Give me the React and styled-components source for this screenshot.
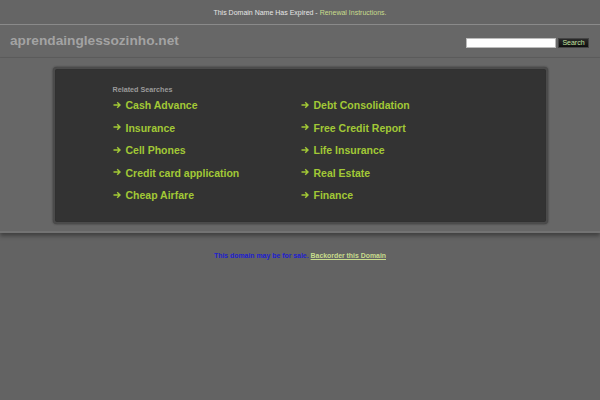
import React from "react";
import styled, { createGlobalStyle } from "styled-components";

const Global = createGlobalStyle`
  html, body { margin: 0; padding: 0; background: #636363; }
  body { font-family: "Liberation Sans", Arial, sans-serif; }
`;

const Page = styled.div`
  width: 600px;
  min-height: 400px;
  background: #636363;
`;

const TopBar = styled.div`
  height: 24px;
  display: flex;
  align-items: center;
  justify-content: center;
  font-size: 7px;
  color: #e6e6e6;
  background: #656565;
  border-bottom: 1px solid #8a8a8a;
`;

const Green = styled.span`
  color: #c8dc8c;
`;

const Header = styled.div`
  height: 32px;
  display: flex;
  align-items: center;
  justify-content: space-between;
  padding: 0 11px 0 10px;
  background: #676767;
  border-bottom: 1px solid #5d5d5d;
`;

const Domain = styled.div`
  font-size: 13.7px;
  font-weight: bold;
  color: #a3a3a3;
  padding-bottom: 1px;
`;

const SearchForm = styled.div`
  display: flex;
  align-items: center;
  gap: 2px;
  padding-top: 3px;
`;

const Input = styled.div`
  width: 88px;
  height: 8px;
  background: #fff;
  border: 1px solid #bbb;
`;

const Button = styled.div`
  width: 31px;
  height: 10px;
  display: flex;
  align-items: center;
  justify-content: center;
  font-size: 7px;
  color: #c4e2a0;
  background: linear-gradient(#2a2a2a, #0e0e0e);
  border: 1px solid #444;
  box-sizing: border-box;
`;

const Main = styled.div`
  height: 175px;
  padding-top: 9px;
  box-sizing: border-box;
  background: #676767;
  border-bottom: 2px solid #737373;
  box-shadow: 0 3px 4px rgba(0, 0, 0, 0.35);
`;

const Panel = styled.div`
  width: 495px;
  height: 157px;
  margin: 0 auto;
  box-sizing: border-box;
  background: #333333;
  border: 2px solid #4b4b4b;
  border-radius: 4px;
  box-shadow: 0 0 2px #2a2a2a, inset 0 0 1px #222;
  padding: 16px 0 0 58px;
`;

const Label = styled.div`
  font-size: 7.2px;
  font-weight: bold;
  color: #9a9a9a;
  margin-bottom: 4.5px;
`;

const Grid = styled.div`
  display: grid;
  grid-template-columns: 188px 200px;
  grid-auto-rows: 22.5px;
`;

const Link = styled.div`
  display: flex;
  align-items: center;
  height: 13px;
  font-size: 10.5px;
  font-weight: bold;
  color: #a2c936;
`;

const Arrow = styled.svg`
  width: 8px;
  height: 8px;
  margin: 0 5px 1px 0;
  flex: none;
`;

const Footer = styled.div`
  margin-top: 19px;
  text-align: center;
  font-size: 6.9px;
  font-weight: bold;
`;

const Blue = styled.span`
  color: #2020d0;
`;

const Under = styled.span`
  color: #c8dc8c;
  text-decoration: underline;
  margin-left: 2px;
`;

const left = ["Cash Advance", "Insurance", "Cell Phones", "Credit card application", "Cheap Airfare"];
const right = ["Debt Consolidation", "Free Credit Report", "Life Insurance", "Real Estate", "Finance"];

export default function App() {
  const items = [];
  left.forEach((l, i) => {
    items.push(l, right[i]);
  });
  return (
    <Page>
      <Global />
      <TopBar>
        This Domain Name Has Expired -&nbsp;<Green>Renewal Instructions.</Green>
      </TopBar>
      <Header>
        <Domain>aprendainglessozinho.net</Domain>
        <SearchForm>
          <Input />
          <Button>Search</Button>
        </SearchForm>
      </Header>
      <Main>
        <Panel>
          <Label>Related Searches</Label>
          <Grid>
            {items.map((t) => (
              <Link key={t}>
                <Arrow viewBox="0 0 8 8">
                  <path d="M0.5 4H7M4.2 1.2L7 4L4.2 6.8" stroke="#a2c936" strokeWidth="1.4" fill="none" />
                </Arrow>
                {t}
              </Link>
            ))}
          </Grid>
        </Panel>
      </Main>
      <Footer>
        <Blue>This domain may be for sale.</Blue>
        <Under>Backorder this Domain</Under>
      </Footer>
    </Page>
  );
}
